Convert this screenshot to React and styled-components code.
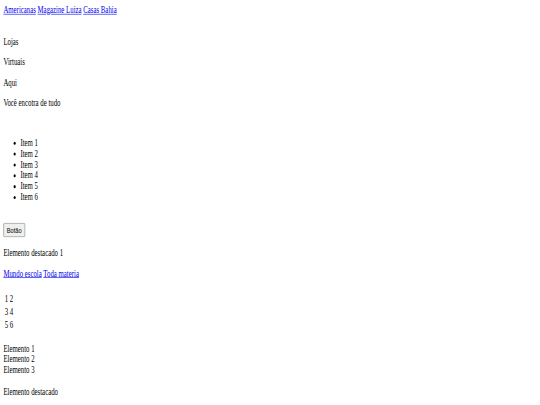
import styled, { createGlobalStyle } from 'styled-components';

const GlobalStyle = createGlobalStyle`
  html,
  body {
    margin: 0;
    overflow: hidden;
    background: #fff;
  }
`;

const Viewport = styled.div`
  height: 405px;
  overflow: hidden;
  width: 540px;
`;

const Page = styled.div`
  box-sizing: border-box;
  color: #000;
  font-family: 'Liberation Serif', 'Times New Roman', serif;
  font-size: 16px;
  padding: 8px;
  transform: scale(0.425, 0.603);
  transform-origin: 0 0;
  width: 1270px;
`;

const Nav = styled.nav`
  margin-bottom: 34px;
`;

const Link = styled.a`
  color: #0000ee;
  text-decoration: underline;
`;

const Text = styled.p`
  margin: ${(p) => (p.$top ? `${p.$top}px` : '16px')} 0 16px;
`;

const Intro = styled.section`
  margin-bottom: 48px;

  p:first-child {
    margin-top: 0;
  }
`;

const List = styled.ul`
  margin: 16px 0 34px;
  padding-left: 40px;
`;

const Button = styled.button`
  background: #efefef;
  border: 1px solid #767676;
  border-radius: 2px;
  color: #000;
  font-family: 'Liberation Sans', Arial, sans-serif;
  font-size: 13.33px;
  padding: 3px 7px;
`;

const Table = styled.table`
  border-spacing: 2px;
  margin: 20px 0 18px;

  td {
    padding: 1px;
  }
`;

const Item = styled.div``;

const items = ['Item 1', 'Item 2', 'Item 3', 'Item 4', 'Item 5', 'Item 6'];
const rows = [
  ['1', '2'],
  ['3', '4'],
  ['5', '6'],
];

export default function App() {
  return (
    <>
      <GlobalStyle />
      <Viewport>
        <Page>
          <Nav>
            <Link href="#">Americanas</Link> <Link href="#">Magazine Luiza</Link>{' '}
            <Link href="#">Casas Bahia</Link>
          </Nav>
          <Intro>
            <Text>Lojas</Text>
            <Text>Virtuais</Text>
            <Text>Aqui</Text>
            <Text>Você encotra de tudo</Text>
          </Intro>
          <List>
            {items.map((item) => (
              <li key={item}>{item}</li>
            ))}
          </List>
          <Button>Botão</Button>
          <Text $top={18}>Elemento destacado 1</Text>
          <Text>
            <Link href="#">Mundo escola</Link> <Link href="#">Toda materia</Link>
          </Text>
          <Table>
            <tbody>
              {rows.map((row) => (
                <tr key={row[0]}>
                  {row.map((cell) => (
                    <td key={cell}>{cell}</td>
                  ))}
                </tr>
              ))}
            </tbody>
          </Table>
          <Item>Elemento 1</Item>
          <Item>Elemento 2</Item>
          <Item>Elemento 3</Item>
          <Text $top={18}>Elemento destacado</Text>
        </Page>
      </Viewport>
    </>
  );
}
